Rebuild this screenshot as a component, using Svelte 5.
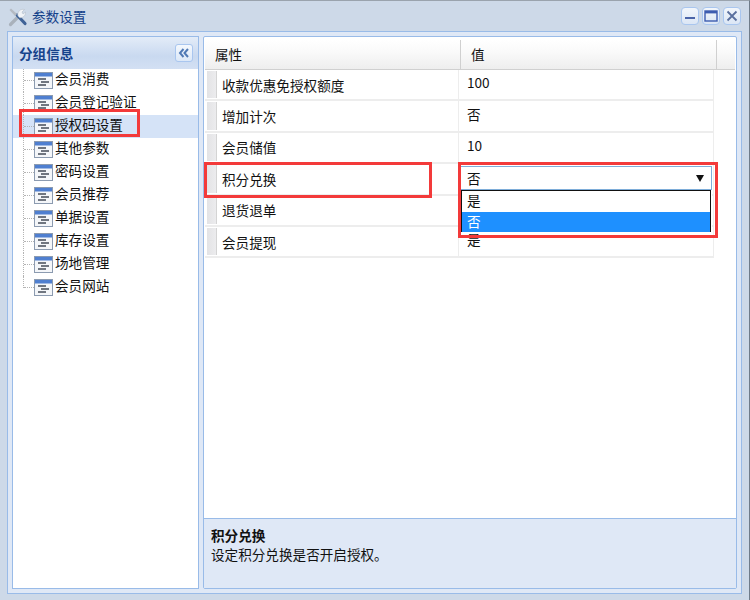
<script lang="ts">
  const groups = ['会员消费', '会员登记验证', '授权码设置', '其他参数', '密码设置', '会员推荐', '单据设置', '库存设置', '场地管理', '会员网站'];
  const selectedGroup = 2;

  const props = [
    { name: '收款优惠免授权额度', value: '100' },
    { name: '增加计次', value: '否' },
    { name: '会员储值', value: '10' },
    { name: '积分兑换', value: '' },
    { name: '退货退单', value: '' },
    { name: '会员提现', value: '是' },
  ];
</script>

<div class="window">
  <div class="titlebar">
    <svg class="title-icon" width="20" height="20" viewBox="0 0 20 20">
      <path d="M2.5 17.5 L10 10" stroke="#a9b1bb" stroke-width="3.2" stroke-linecap="round" />
      <path d="M9 8 L17 16.5" stroke="#3f6296" stroke-width="3.2" stroke-linecap="round" />
      <path d="M1.5 3 L3 1.5 L9 7 L7 9 Z" fill="#b4bac2" />
      <path d="M10 9 C9 5 12 1.5 16.5 2.5 L14 5 L15 7 L17.5 5 C18 9 14 11.5 11.5 10.5 Z" fill="#f0f3f7" stroke="#b4bdc9" stroke-width="0.6" />
    </svg>
    <span class="title">参数设置</span>
    <div class="tools">
      <button class="tool" aria-label="最小化">
        <svg width="12" height="12" viewBox="0 0 12 12"><rect x="1" y="7" width="10" height="2" fill="#4a64a8" /></svg>
      </button>
      <button class="tool" aria-label="最大化">
        <svg width="14" height="12" viewBox="0 0 14 12"><rect x="1" y="1" width="12" height="10" fill="none" stroke="#3d5cb0" stroke-width="1.4" /><rect x="1" y="1" width="12" height="2.4" fill="#3d5cb0" /></svg>
      </button>
      <button class="tool" aria-label="关闭">
        <svg width="12" height="12" viewBox="0 0 12 12"><path d="M1.5 1.5 L10.5 10.5 M10.5 1.5 L1.5 10.5" stroke="#5a6f9e" stroke-width="1.8" /></svg>
      </button>
    </div>
  </div>

  <div class="frame">
    <aside class="side">
      <div class="side-head">
        <span>分组信息</span>
        <button class="collapse" aria-label="收起">
          <svg width="12" height="10" viewBox="0 0 12 10"><path d="M5.5 1 L2 5 L5.5 9 M10 1 L6.5 5 L10 9" fill="none" stroke="#4f79b5" stroke-width="2" /></svg>
        </button>
      </div>
      <ul class="tree">
        {#each groups as group, i}
          <li class="node" class:selected={i === selectedGroup}>
            <span class="branch" class:last={i === groups.length - 1}></span>
            <svg class="leaf" width="19" height="17" viewBox="0 0 19 17">
              <rect x="0.5" y="0.5" width="18" height="16" fill="#f4f6f9" stroke="#8c9bb0" />
              <rect x="1" y="1" width="17" height="3.5" fill="#4f7fd0" />
              <path d="M4 7 H12 M7 10 H15 M4 13 H12" stroke="#444c58" stroke-width="1.4" />
            </svg>
            <span class="node-text">{group}</span>
          </li>
        {/each}
      </ul>
      <div class="mark mark-group"></div>
    </aside>

    <section class="grid-panel">
      <div class="grid-head">
        <div class="head-cell name-col">属性</div>
        <div class="head-cell value-col">值</div>
        <div class="head-rest"></div>
      </div>
      <div class="rows">
        {#each props as p}
          <div class="row">
            <div class="cell name-col">
              <span class="handle"></span>
              <span>{p.name}</span>
            </div>
            <div class="cell value-cell">{p.value}</div>
          </div>
        {/each}

        <div class="combo">
          <div class="combo-input">
            <span>否</span>
            <span class="arrow"></span>
          </div>
          <div class="combo-list">
            <div class="option">是</div>
            <div class="option active">否</div>
          </div>
        </div>
        <div class="mark mark-name"></div>
        <div class="mark mark-value"></div>
      </div>
      <div class="desc">
        <div class="desc-title">积分兑换</div>
        <div>设定积分兑换是否开启授权。</div>
      </div>
    </section>
  </div>
</div>

<style>
  :global(body) {
    margin: 0;
    background: #cdd9e8;
  }

  .window {
    width: 750px;
    height: 600px;
    box-sizing: border-box;
    display: flex;
    flex-direction: column;
    padding: 0 7px 6px;
    background: #cdd9e8;
    border-top: 1px solid #9aa3ad;
    border-right: 1px solid #6f7c8a;
    font-family: "Noto Sans CJK SC", "Noto Sans", sans-serif;
    font-size: 13.6px;
    color: #111;
  }

  .titlebar {
    height: 30px;
    flex: none;
    display: flex;
    align-items: center;
    gap: 4px;
    padding-left: 1px;
  }

  .title-icon {
    margin-top: 2px;
  }

  .title {
    color: #15428b;
    line-height: 30px;
  }

  .tools {
    margin-left: auto;
    margin-right: 1px;
    display: flex;
    gap: 3px;
  }

  .tool {
    width: 18px;
    height: 18px;
    padding: 0;
    display: flex;
    align-items: center;
    justify-content: center;
    border: 1px solid #a9c6ef;
    border-radius: 4px;
    background: linear-gradient(#f2f6fb, #dbe6f5);
  }

  .frame {
    flex: 1;
    min-height: 0;
    display: flex;
    gap: 4px;
    padding: 4px 4px 4px;
    background: #dfe8f6;
    border: 1px solid #99bbe8;
  }

  .side {
    position: relative;
    width: 187px;
    flex: none;
    box-sizing: border-box;
    background: #fff;
    border: 1px solid #99bbe8;
  }

  .side-head {
    height: 32px;
    box-sizing: border-box;
    display: flex;
    align-items: center;
    justify-content: space-between;
    padding: 0 5px 0 6px;
    background: linear-gradient(#e3ecf8, #c9d9f0 60%, #d3e0f3);
    color: #15428b;
    font-weight: 700;
  }

  .collapse {
    width: 18px;
    height: 18px;
    padding: 0;
    display: flex;
    align-items: center;
    justify-content: center;
    border: 1px solid #a9c6ef;
    border-radius: 3px;
    background: linear-gradient(#f4f8fd, #dce8f8);
  }

  .tree {
    list-style: none;
    margin: 0;
    padding: 0;
  }

  .node {
    height: 23px;
    display: flex;
    align-items: center;
    position: relative;
    padding-left: 21px;
    white-space: nowrap;
  }

  .node.selected {
    background: #d5e3f7;
  }

  .branch {
    position: absolute;
    left: 10px;
    top: 0;
    bottom: 0;
    width: 10px;
    border-left: 1px dotted #b4b4b4;
  }

  .branch::after {
    content: "";
    position: absolute;
    left: 0;
    right: 0;
    top: 11px;
    border-top: 1px dotted #b4b4b4;
  }

  .branch.last {
    bottom: 11px;
  }

  .leaf {
    flex: none;
  }

  .node-text {
    margin: 0 0 5px 2px;
  }

  .grid-panel {
    flex: 1;
    min-width: 0;
    display: flex;
    flex-direction: column;
    background: #fff;
    border: 1px solid #99bbe8;
    border-radius: 2px;
    padding: 3px 1px 0;
  }

  .grid-head {
    height: 29px;
    flex: none;
    display: flex;
    background: linear-gradient(#fff, #f9f9f9 45%, #eeeeee);
    border-bottom: 1px solid #d0d0d0;
  }

  .head-cell {
    line-height: 29px;
    padding-left: 10px;
    box-sizing: border-box;
    border-right: 1px solid #d0d0d0;
  }

  .name-col {
    width: 256px;
    flex: none;
  }

  .grid-head .value-col {
    width: 256px;
    flex: none;
  }

  .head-rest {
    flex: 1;
  }

  .rows {
    position: relative;
    flex: 1;
    min-height: 0;
  }

  .row {
    width: 509px;
    height: 31.4px;
    box-sizing: border-box;
    display: flex;
    border-bottom: 2px solid #ededed;
    border-right: 1px solid #ededed;
  }

  .cell {
    display: flex;
    align-items: center;
    box-sizing: border-box;
    height: 100%;
  }

  .row .name-col {
    width: 254px;
    border-right: 1px solid #ededed;
  }

  .handle {
    align-self: stretch;
    width: 9px;
    margin: 1px 5px 1px 2px;
    background: linear-gradient(90deg, #e3e3e5, #ececee);
    border-right: 1px solid #d4d4d4;
  }

  .value-cell {
    padding-left: 8px;
    padding-bottom: 5px;
    flex: 1;
  }

  .combo {
    position: absolute;
    left: 255px;
    top: 96px;
    width: 252px;
    background: #fff;
  }

  .combo-input {
    height: 24px;
    box-sizing: border-box;
    display: flex;
    align-items: center;
    justify-content: space-between;
    padding: 0 7px 0 6px;
    border: 1px solid #7eadd9;
  }

  .combo-input span:first-child {
    margin-bottom: 1px;
  }

  .arrow {
    width: 0;
    height: 0;
    border-left: 4px solid transparent;
    border-right: 4px solid transparent;
    border-top: 7px solid #111;
  }

  .combo-list {
    border: 1px solid #111;
    border-bottom: 0;
    margin: 0 1px;
  }

  .option {
    height: 21px;
    line-height: 19px;
    padding-left: 5px;
  }

  .option.active {
    height: 20px;
    background: #1e90ff;
    color: #fff;
  }

  .mark {
    position: absolute;
    box-sizing: border-box;
    border: 3px solid #f33a3a;
    pointer-events: none;
  }

  .mark-group {
    left: 6px;
    top: 72px;
    width: 121px;
    height: 28px;
  }

  .mark-name {
    left: -1px;
    top: 92px;
    width: 228px;
    height: 36px;
  }

  .mark-value {
    left: 253px;
    top: 92px;
    width: 260px;
    height: 76px;
  }

  .desc {
    height: 70px;
    flex: none;
    box-sizing: border-box;
    margin: 0 -1px;
    padding: 7px 7px;
    background: #dfe8f6;
    border-top: 1px solid #99bbe8;
    line-height: 19px;
  }

  .desc-title {
    font-weight: 700;
  }
</style>
